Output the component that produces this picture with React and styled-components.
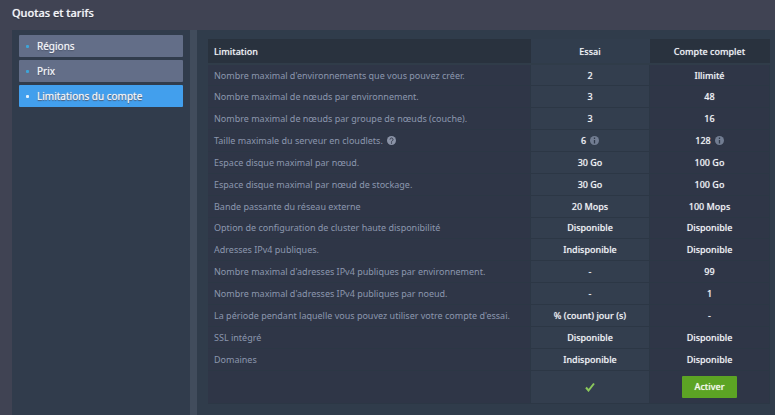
import React, { useState } from "react";
import styled, { createGlobalStyle } from "styled-components";

const GlobalStyle = createGlobalStyle`
* {
box-sizing: border-box;
}
body {
margin: 0;
background: #404353;
color: #f1f3f6;
font-family: "Noto Sans", "Open Sans", sans-serif;
font-size: 9px;
}
`;

const StyledPage = styled.div`
display: flex;
flex-direction: column;
min-height: 100vh;
padding-left: 12px;
`;

const StyledHeading = styled.h1`
margin: 0;
padding: 3px 0 7px;
font-size: 11px;
line-height: 20px;
font-weight: 500;
text-shadow: 0 0 1px #c8ccd6, 0 1px 1px #20242e;
`;

const StyledBody = styled.div`
display: flex;
flex: 1;
background: #414c5c;
`;

// left menu
const StyledNav = styled.nav`
display: flex;
flex-direction: column;
flex: 0 0 178px;
gap: 3px;
padding: 5px 7px;
background: #313c4c;
`;

const StyledTab = styled.button`
display: flex;
align-items: center;
height: 22px;
padding: 0 7px;
gap: 8px;
border: 0;
border-radius: 1px;
background: ${(props) => (props.$active ? "#429fed" : "#636e88")};
color: #f4f6f9;
font: inherit;
font-size: 10px;
text-shadow: 0 0 1px #c8ccd6, 0 1px 1px #3c465c;
cursor: pointer;
`;

const StyledDot = styled.span`
width: 3px;
height: 3px;
border-radius: 1px;
background: ${(props) => (props.$active ? "#e4f2fd" : "#3da5d8")};
`;

// table panel
const StyledPanel = styled.section`
display: flex;
flex: 1;
margin-left: 7px;
padding: 9px 5px 11px 11px;
background: #303c4b;
`;

const StyledTable = styled.table`
width: 100%;
table-layout: fixed;
border-collapse: collapse;
`;

const StyledCol = styled.col`
width: ${(props) => props.$width};
`;

const StyledTh = styled.th`
height: 25px;
padding: 0 6px;
border-bottom: 2px solid #303c49;
background: ${(props) => (props.$trial ? "#313d4d" : "#29323e")};
font-weight: 500;
text-align: ${(props) => (props.$left ? "left" : "center")};
text-shadow: 0 0 1px #8a92a0;
`;

const StyledCell = styled.td`
height: ${(props) => (props.$tall ? "32px" : "21px")};
padding: 0 6px;
border-bottom: 1px solid #2c3745;
border-right: 1px solid #2c3745;
background: ${(props) => (props.$trial ? "#333e4e" : "#2f3647")};
color: #f1f3f6;
font-weight: 500;
text-align: center;
text-shadow: 0 0 1px #8a92a0;
white-space: nowrap;
`;

const StyledLabel = styled(StyledCell).attrs({ as: "th", scope: "row" })`
color: #8c97ae;
font-weight: 400;
text-align: left;
text-shadow: none;
`;

const StyledIcon = styled.svg`
width: 9px;
height: 9px;
margin-left: 4px;
vertical-align: -1px;
`;

const StyledCheck = styled.svg`
display: block;
width: 10px;
height: 10px;
margin: 0 auto;
`;

const StyledButton = styled.button`
height: 22px;
padding: 0 13px;
border: 0;
border-radius: 1px;
background: #5ca424;
color: #f4f8ee;
font: inherit;
font-weight: 500;
text-shadow: 0 0 1px #c6dfb0;
cursor: pointer;
`;

const tabs = ["Régions", "Prix", "Limitations du compte"];

const limits = [
    { name: "Nombre maximal d'environnements que vous pouvez créer.", trial: "2", full: "Illimité" },
    { name: "Nombre maximal de nœuds par environnement.", trial: "3", full: "48" },
    { name: "Nombre maximal de nœuds par groupe de nœuds (couche).", trial: "3", full: "16" },
    { name: "Taille maximale du serveur en cloudlets.", trial: "6", full: "128", info: true },
    { name: "Espace disque maximal par nœud.", trial: "30 Go", full: "100 Go" },
    { name: "Espace disque maximal par nœud de stockage.", trial: "30 Go", full: "100 Go" },
    { name: "Bande passante du réseau externe", trial: "20 Mops", full: "100 Mops" },
    { name: "Option de configuration de cluster haute disponibilité", trial: "Disponible", full: "Disponible" },
    { name: "Adresses IPv4 publiques.", trial: "Indisponible", full: "Disponible" },
    { name: "Nombre maximal d'adresses IPv4 publiques par environnement.", trial: "-", full: "99" },
    { name: "Nombre maximal d'adresses IPv4 publiques par noeud.", trial: "-", full: "1" },
    { name: "La période pendant laquelle vous pouvez utiliser votre compte d'essai.", trial: "% (count) jour (s)", full: "-" },
    { name: "SSL intégré", trial: "Disponible", full: "Disponible" },
    { name: "Domaines", trial: "Indisponible", full: "Disponible" },
];

function HelpIcon() {
    return (
        <StyledIcon viewBox="0 0 18 18" aria-hidden="true">
            <circle cx="9" cy="9" r="9" fill="#8b93a7" />
            <path d="M6 7a3 3 0 1 1 4.5 2.6Q9 10.3 9 11.5" fill="none" stroke="#2f3546" strokeWidth="2" />
            <circle cx="9" cy="14" r="1.3" fill="#2f3546" />
        </StyledIcon>
    );
}

function InfoIcon() {
    return (
        <StyledIcon viewBox="0 0 18 18" aria-hidden="true">
            <circle cx="9" cy="9" r="9" fill="#727d92" />
            <path d="M9 3v3M9 8v7" stroke="#303a4a" strokeWidth="2.6" />
        </StyledIcon>
    );
}

export default function App() {
    const [active, setActive] = useState("Limitations du compte");

    return (
        <StyledPage>
            <GlobalStyle />
            <StyledHeading>Quotas et tarifs</StyledHeading>
            <StyledBody>
                <StyledNav>
                    {tabs.map((tab) => (
                        <StyledTab key={tab} type="button" $active={tab === active} onClick={() => setActive(tab)}>
                            <StyledDot $active={tab === active} />
                            {tab}
                        </StyledTab>
                    ))}
                </StyledNav>
                <StyledPanel>
                    <StyledTable>
                        <colgroup>
                            <StyledCol />
                            <StyledCol $width="119px" />
                            <StyledCol $width="120px" />
                        </colgroup>
                        <thead>
                            <tr>
                                <StyledTh scope="col" $left>Limitation</StyledTh>
                                <StyledTh scope="col" $trial>Essai</StyledTh>
                                <StyledTh scope="col">Compte complet</StyledTh>
                            </tr>
                        </thead>
                        <tbody>
                            {limits.map((limit) => (
                                <tr key={limit.name}>
                                    <StyledLabel>{limit.name}{limit.info && <HelpIcon />}</StyledLabel>
                                    <StyledCell $trial>{limit.trial}{limit.info && <InfoIcon />}</StyledCell>
                                    <StyledCell>{limit.full}{limit.info && <InfoIcon />}</StyledCell>
                                </tr>
                            ))}
                            <tr>
                                <StyledCell $tall />
                                <StyledCell $tall $trial>
                                    <StyledCheck viewBox="0 0 20 20" role="img" aria-label="Compte actuel">
                                        <path d="M2 11l5 6L18 3" fill="none" stroke="#8bc85c" strokeWidth="4" />
                                    </StyledCheck>
                                </StyledCell>
                                <StyledCell $tall>
                                    <StyledButton type="button">Activer</StyledButton>
                                </StyledCell>
                            </tr>
                        </tbody>
                    </StyledTable>
                </StyledPanel>
            </StyledBody>
        </StyledPage>
    );
}
